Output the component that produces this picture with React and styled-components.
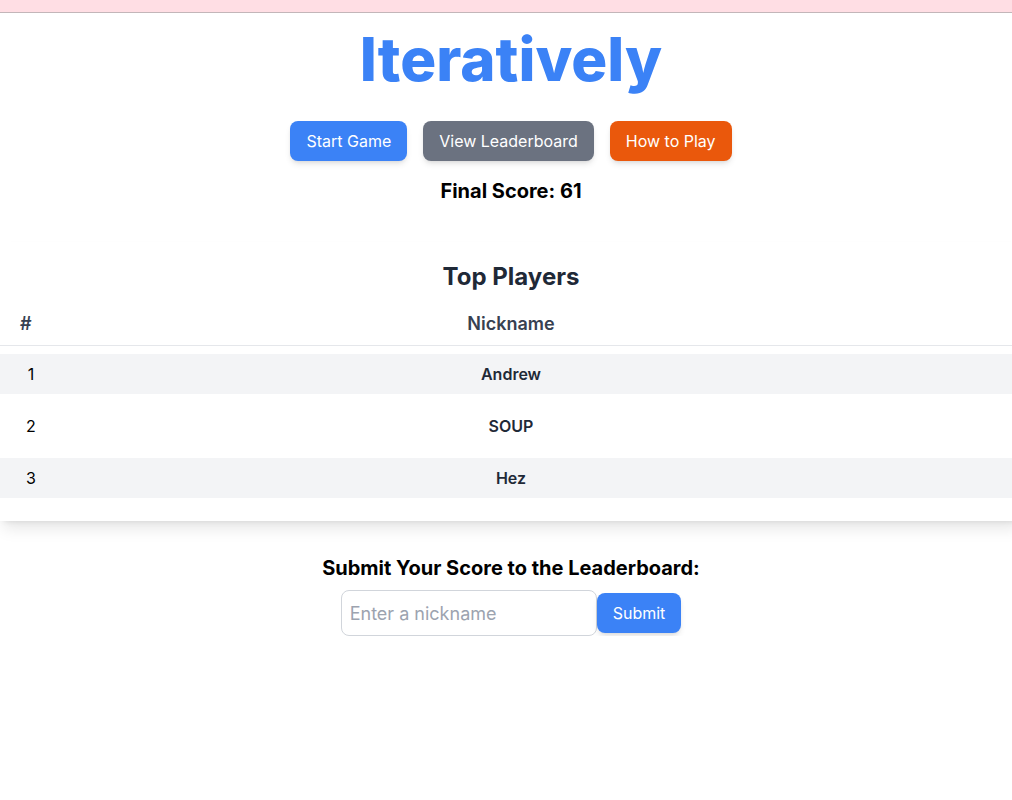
import React from 'react';
import styled, { createGlobalStyle } from 'styled-components';

const GlobalStyle = createGlobalStyle`
  html, body {
    margin: 0;
    padding: 0;
    background: #fff;
    overflow-x: hidden;
  }
  body {
    font-family: 'Inter', 'Liberation Sans', sans-serif;
    color: #000;
  }
`;

const TopBar = styled.div`
  height: 12px;
  background: #ffdee4;
  border-bottom: 1px solid #c3b6b9;
`;

const Page = styled.main`
  width: 1022px;
  display: flex;
  flex-direction: column;
  align-items: center;
`;

const Title = styled.h1`
  margin: 16px 0 0;
  font-size: 60px;
  line-height: 60px;
  font-weight: 800;
  color: #3b82f6;
`;

const ButtonRow = styled.div`
  display: flex;
  gap: 16px;
  margin-top: 32px;
`;

const Button = styled.button`
  height: 40px;
  padding: 0 16px;
  border: none;
  border-radius: 8px;
  background: ${(p) => p.bg || '#3b82f6'};
  color: #fff;
  font-family: inherit;
  font-size: 16px;
  box-shadow: 0 4px 6px -1px rgba(0, 0, 0, 0.1), 0 2px 4px -2px rgba(0, 0, 0, 0.1);
  cursor: pointer;
`;

const Score = styled.h2`
  margin: 16px 0 0;
  font-size: 20px;
  line-height: 28px;
  font-weight: 700;
`;

const Card = styled.section`
  align-self: stretch;
  margin-top: 37px;
  padding: 19px 0 23px;
  background: #fff;
  box-shadow: 0 10px 15px -3px rgba(0, 0, 0, 0.1), 0 4px 6px -4px rgba(0, 0, 0, 0.1);
  display: flex;
  flex-direction: column;
  align-items: center;
`;

const CardTitle = styled.h3`
  margin: 0 0 8px;
  font-size: 24px;
  line-height: 32px;
  font-weight: 700;
  color: #1f2937;
`;

const Table = styled.div`
  width: 100%;
  display: flex;
  flex-direction: column;
  gap: 12px;
`;

const HeadRow = styled.div`
  display: grid;
  grid-template-columns: 62px 1fr 62px;
  align-items: center;
  height: 44px;
  border-bottom: 1px solid #e5e7eb;
  margin-bottom: -4px;
  color: #374151;
  font-size: 18px;
  font-weight: 600;
`;

const HeadCell = styled.div`
  text-align: ${(p) => p.align || 'center'};
  padding-left: ${(p) => (p.align === 'left' ? '20px' : '0')};
`;

const Row = styled.div`
  display: grid;
  grid-template-columns: 62px 1fr 62px;
  align-items: center;
  height: 40px;
  background: ${(p) => (p.striped ? '#f3f4f6' : '#fff')};
  font-size: 16px;
`;

const Rank = styled.div`
  text-align: center;
  color: #000;
`;

const Name = styled.div`
  text-align: center;
  font-weight: 600;
  color: #1f2937;
`;

const SubmitHeading = styled.h2`
  margin: 33px 0 0;
  font-size: 20px;
  line-height: 28px;
  font-weight: 700;
`;

const Form = styled.form`
  display: flex;
  align-items: center;
  margin-top: 8px;
`;

const Input = styled.input`
  width: 256px;
  height: 46px;
  box-sizing: border-box;
  padding: 0 8px;
  border: 1px solid #d1d5db;
  border-radius: 8px;
  font-family: inherit;
  font-size: 18px;
  color: #111827;
  outline: none;

  &::placeholder {
    color: #9ca3af;
  }
`;

const players = ['Andrew', 'SOUP', 'Hez'];

export default function App() {
  return (
    <>
      <GlobalStyle />
      <TopBar />
      <Page>
        <Title>Iteratively</Title>
        <ButtonRow>
          <Button bg="#3b82f6">Start Game</Button>
          <Button bg="#6b7280">View Leaderboard</Button>
          <Button bg="#ea580c">How to Play</Button>
        </ButtonRow>
        <Score>Final Score: 61</Score>
        <Card>
          <CardTitle>Top Players</CardTitle>
          <Table>
            <HeadRow>
              <HeadCell align="left">#</HeadCell>
              <HeadCell>Nickname</HeadCell>
              <HeadCell />
            </HeadRow>
            {players.map((name, i) => (
              <Row key={name} striped={i % 2 === 0}>
                <Rank>{i + 1}</Rank>
                <Name>{name}</Name>
                <div />
              </Row>
            ))}
          </Table>
        </Card>
        <SubmitHeading>Submit Your Score to the Leaderboard:</SubmitHeading>
        <Form onSubmit={(e) => e.preventDefault()}>
          <Input placeholder="Enter a nickname" />
          <Button type="submit">Submit</Button>
        </Form>
      </Page>
    </>
  );
}
